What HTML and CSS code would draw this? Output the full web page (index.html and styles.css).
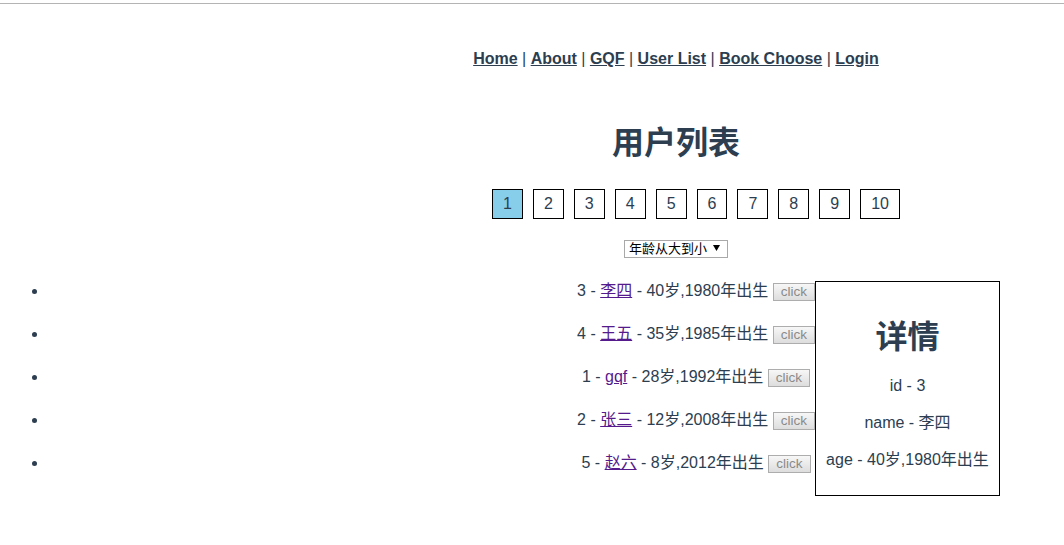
FILE: index.html
```html
<!DOCTYPE html>
<html lang="zh-CN">
<head>
<meta charset="utf-8">
<title>用户列表</title>
<link rel="stylesheet" href="styles.css">
</head>
<body>
<div class="topline"></div>
<div class="app">
  <div class="nav">
    <a href="#">Home</a> | <a href="#">About</a> | <a href="#">GQF</a> | <a href="#">User List</a> | <a href="#">Book Choose</a> | <a href="#">Login</a>
  </div>
  <div class="users">
    <h1 class="title">用户列表</h1>
    <ul class="pager">
      <li class="page active">1</li>
      <li class="page">2</li>
      <li class="page">3</li>
      <li class="page">4</li>
      <li class="page">5</li>
      <li class="page">6</li>
      <li class="page">7</li>
      <li class="page">8</li>
      <li class="page">9</li>
      <li class="page">10</li>
    </ul>
    <div class="sort">
      <span class="select-wrap">
        <select class="select"><option>年龄从大到小</option><option>年龄从小到大</option></select>
        <svg class="arrow" width="7" height="6" viewBox="0 0 7 6"><path d="M0 0H7L3.5 6Z" fill="#000"/></svg>
      </span>
    </div>
    <ul class="list">
      <li>3 - <a class="name" href="#">李四</a> - 40岁,1980年出生 <button class="btn">click</button></li>
      <li>4 - <a class="name" href="#">王五</a> - 35岁,1985年出生 <button class="btn">click</button></li>
      <li>1 - <a class="name" href="#">gqf</a> - 28岁,1992年出生 <button class="btn">click</button></li>
      <li>2 - <a class="name" href="#">张三</a> - 12岁,2008年出生 <button class="btn">click</button></li>
      <li>5 - <a class="name" href="#">赵六</a> - 8岁,2012年出生 <button class="btn">click</button></li>
    </ul>
  </div>
</div>
<div class="detail">
  <h1 class="detail-title">详情</h1>
  <p class="detail-row">id - 3</p>
  <p class="detail-row">name - 李四</p>
  <p class="detail-row">age - 40岁,1980年出生</p>
</div>
</body>
</html>
```
FILE: styles.css
```css
html {
  background: #fff;
}
body {
  margin: 0;
  padding: 0 8px;
  font-family: "Liberation Sans", Arial, "Noto Sans CJK SC", sans-serif;
  font-size: 16px;
  line-height: 21px;
  color: #2c3e50;
}
.topline {
  height: 1px;
  margin: 3px -8px 0;
  background: #b4b4b4;
}
.app {
  text-align: center;
}
.nav {
  padding: 44px 0 0 288px;
  line-height: 21px;
}
.nav a {
  font-weight: bold;
  color: #2c3e50;
  text-decoration: underline;
}
.title {
  margin: 53px 0 0;
  padding-left: 288px;
  font-size: 32px;
  line-height: 42px;
  font-weight: bold;
}
.pager {
  list-style: none;
  display: flex;
  justify-content: center;
  gap: 10px;
  margin: 25px 0 0;
  padding: 0 0 0 328px;
}
.page {
  border: 1px solid #000;
  padding: 5px 10px;
  line-height: 18px;
}
.page.active {
  background: #87ceeb;
}
.sort {
  display: flex;
  justify-content: center;
  margin-top: 21px;
  padding-left: 288px;
  height: 18px;
}
.select-wrap {
  position: relative;
  display: inline-flex;
}
.select {
  appearance: none;
  -webkit-appearance: none;
  width: 104px;
  height: 18px;
  margin: 0;
  padding: 0 0 0 4px;
  border: 1px solid #a9a9a9;
  border-radius: 0;
  background: #fff;
  color: #000;
  font-family: "Liberation Sans", "Noto Sans CJK SC", sans-serif;
  font-size: 13px;
  line-height: 16px;
  text-align: left;
}
.arrow {
  position: absolute;
  right: 8px;
  top: 5px;
  pointer-events: none;
}
.list {
  margin: 22px 0 0;
  padding: 0 0 0 40px;
  list-style: disc;
}
.list li {
  padding-left: 288px;
  line-height: 21px;
  margin-bottom: 22px;
}
.name {
  color: #551a8b;
  text-decoration: underline;
}
.btn {
  height: 18px;
  padding: 0 7px;
  border: 1px solid #adadad;
  border-radius: 0;
  background: linear-gradient(#f7f7f7, #dddddd);
  color: #8a8a8a;
  font-family: "Liberation Sans", Arial, sans-serif;
  font-size: 13.5px;
  line-height: 16px;
  vertical-align: 0;
}
.detail {
  position: absolute;
  left: 815px;
  top: 281px;
  width: 183px;
  border: 1px solid #000;
  background: #fff;
  text-align: center;
  padding: 34px 0 9px;
}
.detail-title {
  margin: 0 0 17px;
  font-size: 32px;
  line-height: 42px;
  font-weight: bold;
}
.detail-row {
  margin: 0 0 16px;
  line-height: 21px;
}
```
